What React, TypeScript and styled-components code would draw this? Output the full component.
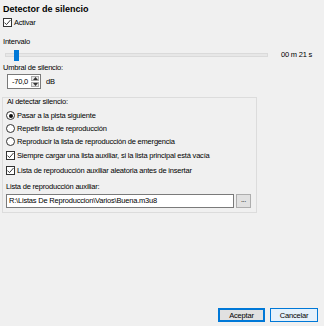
import React from 'react';
import styled, { createGlobalStyle } from 'styled-components';

const GlobalStyle = createGlobalStyle`
  html, body {
    margin: 0;
    padding: 0;
    background: #f0f0f0;
  }
  body {
    font-family: "Liberation Sans", Arial, sans-serif;
    font-size: 7.5px;
    letter-spacing: -0.2px;
    color: #000;
  }
  * {
    box-sizing: border-box;
  }
`;

const Dialog = styled.div`
  width: 324px;
  height: 326px;
  display: flex;
  flex-direction: column;
  padding: 4px 6px 4px 3px;
  background: #f0f0f0;
  overflow: hidden;
`;

const Title = styled.div`
  font-size: 9px;
  font-weight: bold;
  letter-spacing: 0;
  line-height: 11px;
  height: 11px;
  white-space: nowrap;
`;

const Label = styled.div<{ $top: number; $left?: number }>`
  height: 10px;
  line-height: 10px;
  margin-top: ${(p) => p.$top}px;
  margin-left: ${(p) => p.$left ?? 0}px;
  white-space: nowrap;
`;

const OptionRow = styled.label<{ $h: number; $top?: number }>`
  display: flex;
  align-items: center;
  gap: 2px;
  height: ${(p) => p.$h}px;
  margin-top: ${(p) => p.$top ?? 0}px;
  white-space: nowrap;
`;

const Box = styled.span`
  width: 9px;
  height: 9px;
  flex: none;
  border: 1px solid #333;
  background: #fff;
  display: flex;
  align-items: center;
  justify-content: center;
`;

const Circle = styled(Box)`
  border-radius: 50%;
`;

const Dot = styled.span`
  width: 4px;
  height: 4px;
  border-radius: 50%;
  background: #111;
`;

const SliderRow = styled.div`
  display: flex;
  align-items: center;
  height: 13px;
  margin-top: 1px;
`;

const Track = styled.div`
  position: relative;
  width: 263px;
  height: 4px;
  margin-left: 2px;
  background: #e7e7e7;
  border: 1px solid #dadada;
`;

const Thumb = styled.div`
  position: absolute;
  top: -4px;
  width: 5px;
  height: 11px;
  background: #0078d7;
`;

const SliderValue = styled.span`
  margin-left: 13px;
  white-space: nowrap;
`;

const SpinRow = styled.div`
  display: flex;
  align-items: center;
  height: 15px;
  margin-top: 1px;
  padding-left: 4px;
`;

const SpinBox = styled.div`
  display: flex;
  width: 34px;
  height: 15px;
  border: 1px solid #7a7a7a;
  background: #fff;
`;

const SpinText = styled.span`
  flex: 1;
  text-align: right;
  padding-right: 3px;
  line-height: 13px;
`;

const SpinButtons = styled.div`
  display: flex;
  flex-direction: column;
  width: 9px;
  padding: 1px 1px 1px 0;
  gap: 1px;
`;

const SpinButton = styled.div`
  flex: 1;
  background: #e5e5e5;
  border: 1px solid #acacac;
  display: flex;
  align-items: center;
  justify-content: center;
`;

const Unit = styled.span`
  margin-left: 5px;
`;

const Group = styled.div`
  margin-top: 8px;
  margin-left: -1px;
  width: 255px;
  border: 1px solid #dcdcdc;
  padding: 0 3px 4px 3px;
  display: flex;
  flex-direction: column;
`;

const GroupTitle = styled.div`
  height: 8px;
  line-height: 8px;
  margin-left: 1px;
  margin-bottom: 3px;
  white-space: nowrap;
`;

const InputRow = styled.div`
  display: flex;
  gap: 2px;
  height: 14px;
  margin-top: 2px;
`;

const TextInput = styled.div`
  width: 228px;
  height: 14px;
  border: 1px solid #7a7a7a;
  background: #fff;
  padding-left: 2px;
  line-height: 12px;
  white-space: nowrap;
  overflow: hidden;
`;

const BrowseButton = styled.div`
  width: 15px;
  height: 14px;
  border: 1px solid #adadad;
  background: #e1e1e1;
  text-align: center;
  line-height: 10px;
  font-size: 7px;
`;

const Footer = styled.div`
  margin-top: auto;
  display: flex;
  justify-content: flex-end;
  gap: 5px;
`;

const DialogButton = styled.div<{ $w: number; $primary?: boolean }>`
  width: ${(p) => p.$w}px;
  height: 14px;
  display: flex;
  align-items: center;
  justify-content: center;
  border: ${(p) => (p.$primary ? '2px' : '1px')} solid #0078d7;
  background: ${(p) => (p.$primary ? '#e1e1e1' : '#e5f1fb')};
`;

const Check = () => (
  <Box>
    <svg width="7" height="7" viewBox="0 0 7 7">
      <polyline points="0.5,3.6 2.5,5.6 6.5,1" fill="none" stroke="#222" strokeWidth="0.9" />
    </svg>
  </Box>
);

const Radio = ({ on }: { on?: boolean }) => <Circle>{on && <Dot />}</Circle>;

const Arrow = ({ up }: { up?: boolean }) => (
  <svg width="5" height="3" viewBox="0 0 5 3">
    <polygon points={up ? '0,3 2.5,0 5,3' : '0,0 2.5,3 5,0'} fill="#333" />
  </svg>
);

export default function App() {
  return (
    <>
      <GlobalStyle />
      <Dialog>
        <Title>Detector de silencio</Title>
        <OptionRow $h={9} $top={3}>
          <Check />
          <span>Activar</span>
        </OptionRow>

        <Label $top={10}>Intervalo</Label>
        <SliderRow>
          <Track>
            <Thumb style={{ left: 8 }} />
          </Track>
          <SliderValue>00 m 21 s</SliderValue>
        </SliderRow>

        <Label $top={2}>Umbral de silencio:</Label>
        <SpinRow>
          <SpinBox>
            <SpinText>-70,0</SpinText>
            <SpinButtons>
              <SpinButton>
                <Arrow up />
              </SpinButton>
              <SpinButton>
                <Arrow />
              </SpinButton>
            </SpinButtons>
          </SpinBox>
          <Unit>dB</Unit>
        </SpinRow>

        <Group>
          <GroupTitle>Al detectar silencio:</GroupTitle>
          <OptionRow $h={13}>
            <Radio on />
            <span>Pasar a la pista siguiente</span>
          </OptionRow>
          <OptionRow $h={13}>
            <Radio />
            <span>Repetir lista de reproducción</span>
          </OptionRow>
          <OptionRow $h={13}>
            <Radio />
            <span>Reproducir la lista de reproducción de emergencia</span>
          </OptionRow>
          <OptionRow $h={14}>
            <Check />
            <span>Siempre cargar una lista auxiliar, si la lista principal está vacía</span>
          </OptionRow>
          <OptionRow $h={14} $top={1}>
            <Check />
            <span>Lista de reproducción auxiliar aleatoria antes de insertar</span>
          </OptionRow>
          <Label $top={5}>Lista de reproducción auxiliar:</Label>
          <InputRow>
            <TextInput>R:\Listas De Reproduccion\Varios\Buena.m3u8</TextInput>
            <BrowseButton>...</BrowseButton>
          </InputRow>
        </Group>

        <Footer>
          <DialogButton $w={47} $primary>
            Aceptar
          </DialogButton>
          <DialogButton $w={48}>Cancelar</DialogButton>
        </Footer>
      </Dialog>
    </>
  );
}
